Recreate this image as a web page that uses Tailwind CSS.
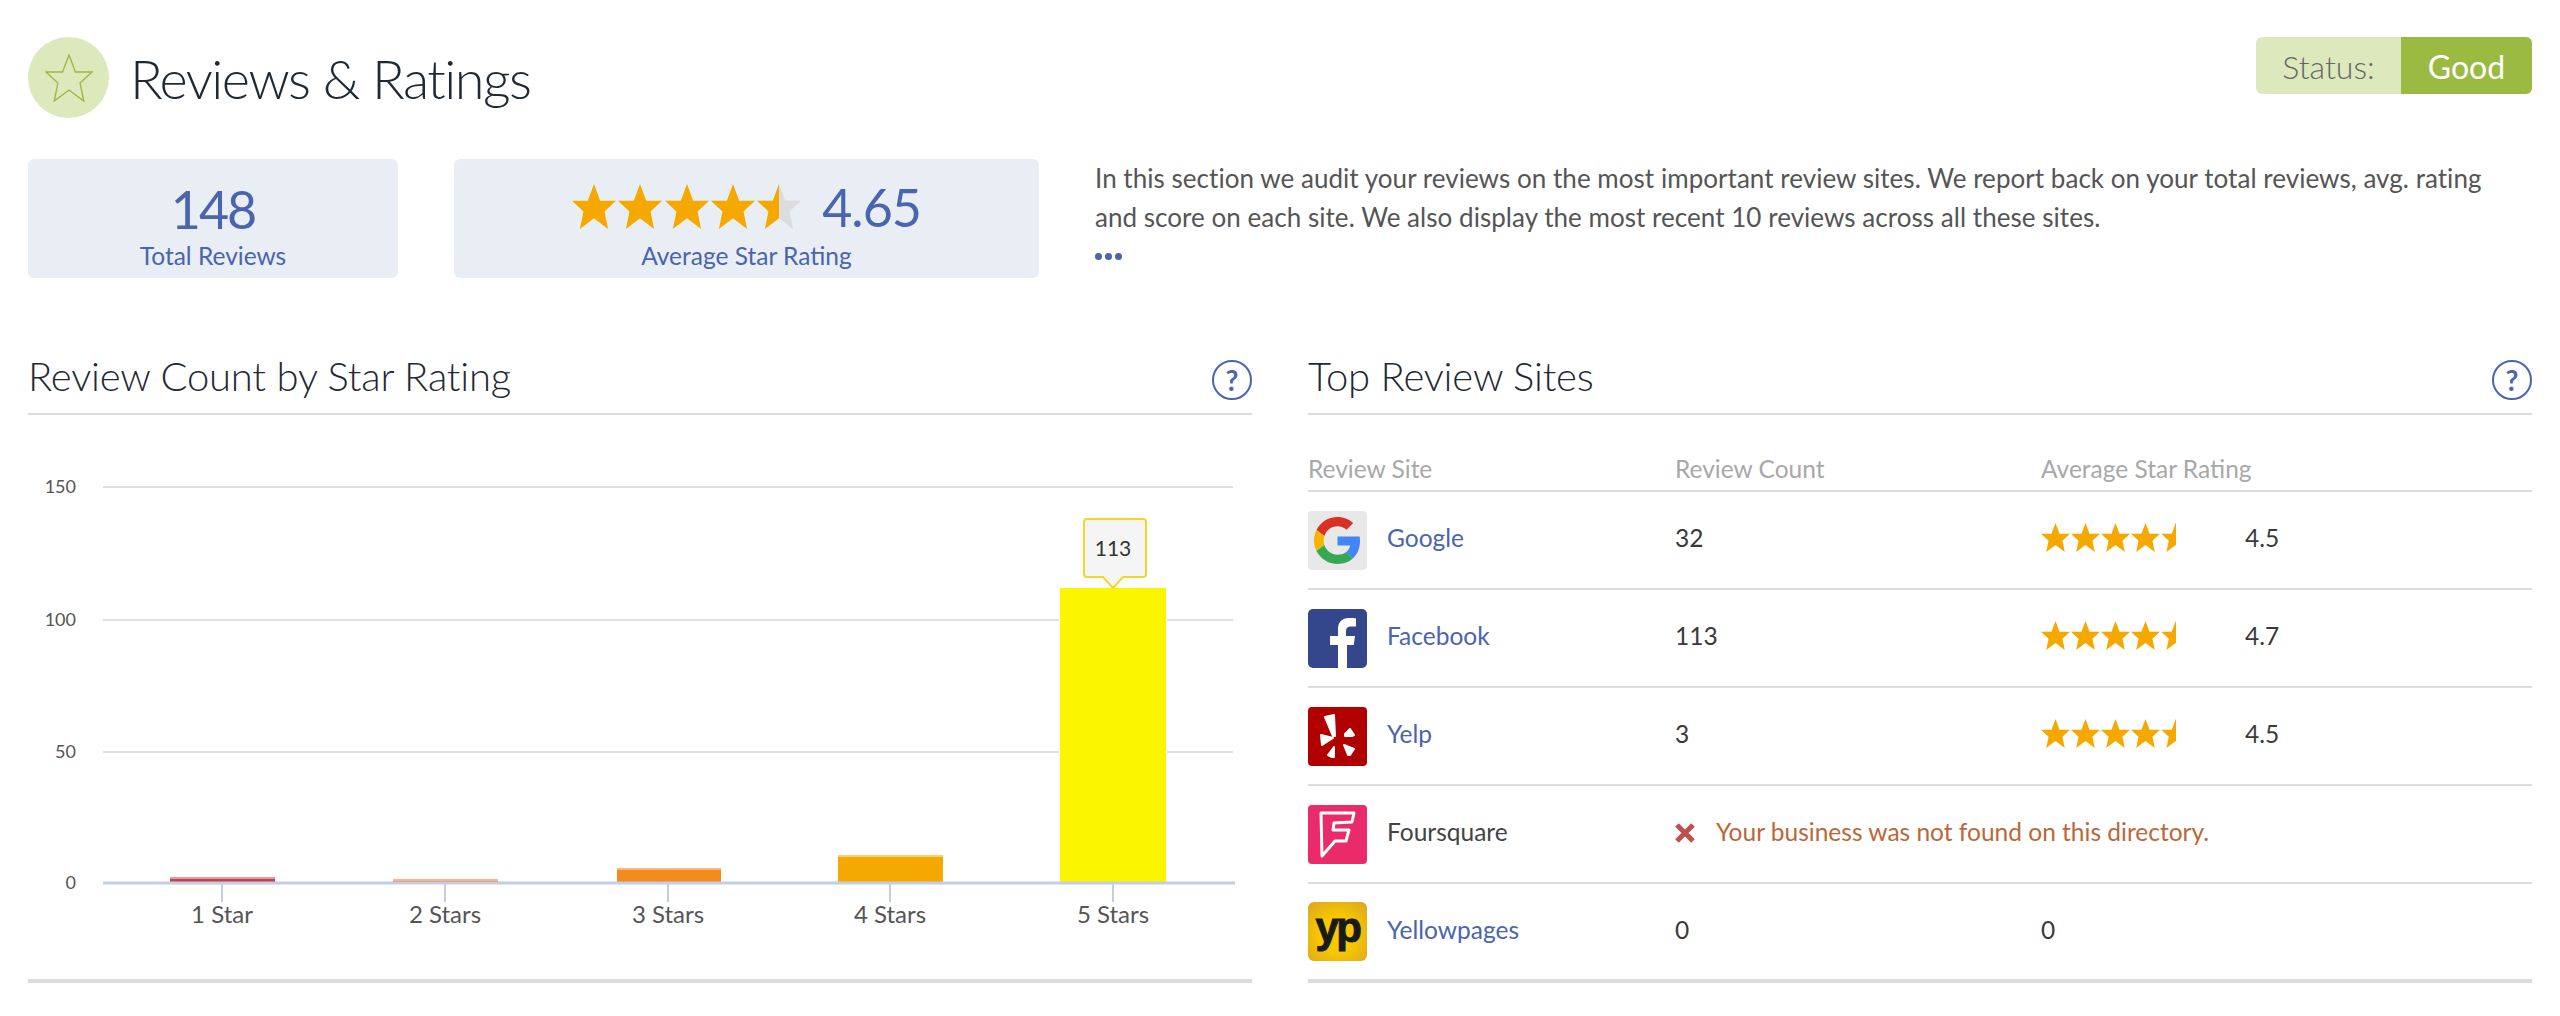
<!DOCTYPE html>
<html lang="en">
  <head>
    <meta charset="UTF-8" />
    <title>Reviews &amp; Ratings</title>
    <script src="https://cdn.jsdelivr.net/npm/@tailwindcss/browser@4"></script>
  </head>
  <body class="bg-white font-['Lato',sans-serif] text-[#3a3a3a] overflow-hidden">
    <svg class="hidden">
      <defs>
        <polygon id="star" points="50,0 64,37 100,37 74,61 82,100 50,76 18,100 26,61 0,37 36,37" />
      </defs>
    </svg>

    <div class="w-[2560px] h-[1016px] px-[28px] pt-[37px]">
      <!-- Header -->
      <header class="flex justify-between items-start h-[81px]">
        <div class="flex items-center gap-[21px]">
          <div class="w-[81px] h-[81px] rounded-full bg-[#dce9bc] flex items-center justify-center">
            <svg class="w-[48px] h-[48px]" viewBox="-2 -2 104 104" fill="none" stroke="#9aba42" stroke-width="3"><use href="#star" /></svg>
          </div>
          <h1 class="text-[54px] tracking-[-1.5px] font-light text-[#1f2933] leading-none pt-[3px]">Reviews &amp; Ratings</h1>
        </div>
        <div class="flex h-[57px] w-[276px] rounded-[6px] overflow-hidden text-[32px] leading-none">
          <div class="w-[145px] bg-[#dce9bc] text-[#666] font-light flex items-center justify-center pt-[2px]">Status:</div>
          <div class="flex-1 bg-[#9aba42] text-white flex items-center justify-center pt-[2px]">Good</div>
        </div>
      </header>

      <!-- Summary row -->
      <section class="flex mt-[41px] h-[119px]">
        <div class="w-[370px] bg-[#e9eef5] rounded-[6px] flex flex-col items-center pt-[24px] text-[#4a64ae]">
          <div class="text-[52px] tracking-[-2px] leading-[52px]">148</div>
          <div class="text-[24.5px] leading-[30px] mt-[6px]">Total Reviews</div>
        </div>
        <div class="w-[585px] ml-[56px] bg-[#e9eef5] rounded-[6px] flex flex-col items-center pt-[19px] text-[#4a64ae]">
          <div class="flex items-center h-[57px] gap-[21px]">
            <div class="flex gap-[2.3px]">
              <svg class="w-[44px] h-[45px]" viewBox="0 0 100 100" preserveAspectRatio="none" fill="#f5a900"><use href="#star" /></svg>
              <svg class="w-[44px] h-[45px]" viewBox="0 0 100 100" preserveAspectRatio="none" fill="#f5a900"><use href="#star" /></svg>
              <svg class="w-[44px] h-[45px]" viewBox="0 0 100 100" preserveAspectRatio="none" fill="#f5a900"><use href="#star" /></svg>
              <svg class="w-[44px] h-[45px]" viewBox="0 0 100 100" preserveAspectRatio="none" fill="#f5a900"><use href="#star" /></svg>
              <svg class="w-[44px] h-[45px]" viewBox="0 0 100 100" preserveAspectRatio="none">
                <defs><clipPath id="half"><rect width="50" height="100" /></clipPath></defs>
                <use href="#star" fill="#dcdcdc" />
                <use href="#star" fill="#f5a900" clip-path="url(#half)" />
              </svg>
            </div>
            <div class="text-[52px] tracking-[-1px] leading-[52px]">4.65</div>
          </div>
          <div class="text-[24.5px] leading-[30px] mt-[6px]">Average Star Rating</div>
        </div>
        <div class="ml-[56px] flex-1 text-[26px] tracking-[0.04px] leading-[39px] text-[#555]">
          <p>In this section we audit your reviews on the most important review sites. We report back on your total reviews, avg. rating<br />and score on each site. We also display the most recent 10 reviews across all these sites.</p>
          <div class="flex gap-[3px] mt-[16px]">
            <span class="w-[7px] h-[7px] rounded-full bg-[#4a64ae]"></span>
            <span class="w-[7px] h-[7px] rounded-full bg-[#4a64ae]"></span>
            <span class="w-[7px] h-[7px] rounded-full bg-[#4a64ae]"></span>
          </div>
        </div>
      </section>

      <div class="flex gap-[56px] mt-[72px]">
        <!-- Chart -->
        <section class="w-[1224px]">
          <div class="flex justify-between items-center h-[65px] border-b-2 border-[#dcdcdc] pb-[9px]">
            <h2 class="text-[40px] tracking-[-0.2px] font-light text-[#1f2933] leading-none mb-[3px]">Review Count by Star Rating</h2>
            <div class="w-[40px] h-[40px] mt-[6px] rounded-full border-2 border-[#4a64ae] text-[#4a64ae] flex items-center justify-center text-[28px] font-bold leading-none">?</div>
          </div>
          <svg class="block w-[1224px] h-[568px] border-b-4 border-[#dcdcdc]" viewBox="28 415 1224 564">
            <g stroke="#e0e0e0" stroke-width="2">
              <line x1="103" x2="1233" y1="487" y2="487" />
              <line x1="103" x2="1233" y1="620" y2="620" />
              <line x1="103" x2="1233" y1="752" y2="752" />
            </g>
            <g font-size="18" fill="#555" text-anchor="end">
              <text x="76" y="493">150</text>
              <text x="76" y="626">100</text>
              <text x="76" y="758">50</text>
              <text x="76" y="889">0</text>
            </g>
            <rect x="170" y="878" width="105" height="5" fill="#c0444c" />
            <rect x="170" y="877" width="105" height="2" fill="#e39aa0" />
            <rect x="393" y="880" width="105" height="3" fill="#f47d3f" />
            <rect x="393" y="879" width="105" height="2" fill="#f9b393" />
            <rect x="617" y="869" width="104" height="14" fill="#f38b1f" />
            <rect x="617" y="868" width="104" height="2" fill="#f8b878" />
            <rect x="838" y="856" width="105" height="27" fill="#f5a900" />
            <rect x="838" y="855" width="105" height="2" fill="#f9cf72" />
            <rect x="1060" y="588" width="106" height="295" fill="#fbf500" stroke="#fff" stroke-width="2" paint-order="stroke" />
            <line x1="103" x2="1235" y1="883" y2="883" stroke="#c3cde6" stroke-width="3" />
            <g stroke="#c3cde6" stroke-width="2">
              <line x1="222" x2="222" y1="884" y2="902" />
              <line x1="445" x2="445" y1="884" y2="902" />
              <line x1="668" x2="668" y1="884" y2="902" />
              <line x1="890" x2="890" y1="884" y2="902" />
              <line x1="1113" x2="1113" y1="884" y2="902" />
            </g>
            <g font-size="24" fill="#555" text-anchor="middle">
              <text x="222" y="923">1 Star</text>
              <text x="445" y="923">2 Stars</text>
              <text x="668" y="923">3 Stars</text>
              <text x="890" y="923">4 Stars</text>
              <text x="1113" y="923">5 Stars</text>
            </g>
            <path d="M1087 519h56a3 3 0 0 1 3 3v52a3 3 0 0 1-3 3h-20l-10 11-10-11h-16a3 3 0 0 1-3-3v-52a3 3 0 0 1 3-3z" fill="#f5f5f5" stroke="#f9d52a" stroke-width="2" />
            <text x="1113" y="556" font-size="21" fill="#333" text-anchor="middle">113</text>
          </svg>
        </section>

        <!-- Top review sites -->
        <section class="w-[1224px]">
          <div class="flex justify-between items-center h-[65px] border-b-2 border-[#dcdcdc] pb-[9px]">
            <h2 class="text-[40px] tracking-[-0.2px] font-light text-[#1f2933] leading-none mb-[3px]">Top Review Sites</h2>
            <div class="w-[40px] h-[40px] mt-[6px] rounded-full border-2 border-[#4a64ae] text-[#4a64ae] flex items-center justify-center text-[28px] font-bold leading-none">?</div>
          </div>

          <div class="grid grid-cols-[367px_366px_1fr] h-[77px] items-end pb-[6px] border-b-2 border-[#dcdcdc] text-[24.5px] leading-[30px] text-[#a8a8a8]">
            <div>Review Site</div>
            <div>Review Count</div>
            <div>Average Star Rating</div>
          </div>

          <!-- Google -->
          <div class="grid grid-cols-[367px_366px_204px_1fr] h-[98px] items-center border-b-2 border-[#dcdcdc] text-[24.5px]">
            <div class="flex items-center gap-[20px]">
              <div class="w-[59px] h-[59px] rounded-[4px] bg-[#e8e8e8] flex items-center justify-center">
                <svg class="w-[47px] h-[47px]" viewBox="0 0 48 48">
                  <path fill="#d93025" d="M24 9.5c3.54 0 6.71 1.22 9.21 3.6l6.85-6.85C35.9 2.38 30.47 0 24 0 14.62 0 6.51 5.38 2.56 13.22l7.98 6.19C12.43 13.72 17.74 9.5 24 9.5z" />
                  <path fill="#4285f4" d="M46.98 24.55c0-1.57-.15-3.09-.38-4.55H24v9.02h12.94c-.58 2.96-2.26 5.48-4.78 7.18l7.73 6c4.51-4.18 7.09-10.36 7.09-17.65z" />
                  <path fill="#f4b400" d="M10.53 28.59c-.48-1.45-.76-2.99-.76-4.59s.27-3.14.76-4.59l-7.98-6.19C.92 16.46 0 20.12 0 24c0 3.88.92 7.54 2.56 10.78l7.97-6.19z" />
                  <path fill="#34a853" d="M24 48c6.48 0 11.93-2.13 15.89-5.81l-7.73-6c-2.15 1.45-4.92 2.3-8.16 2.3-6.26 0-11.57-4.22-13.47-9.91l-7.98 6.19C6.51 42.62 14.62 48 24 48z" />
                </svg>
              </div>
              <span class="text-[#4a64ae] pb-[3px]">Google</span>
            </div>
            <div class="pb-[3px]">32</div>
            <div class="flex gap-[1px] pb-[5px]">
              <svg class="w-[29px] h-[29px]" viewBox="0 0 100 100" fill="#f5a900"><use href="#star" /></svg>
              <svg class="w-[29px] h-[29px]" viewBox="0 0 100 100" fill="#f5a900"><use href="#star" /></svg>
              <svg class="w-[29px] h-[29px]" viewBox="0 0 100 100" fill="#f5a900"><use href="#star" /></svg>
              <svg class="w-[29px] h-[29px]" viewBox="0 0 100 100" fill="#f5a900"><use href="#star" /></svg>
              <svg class="w-[15px] h-[29px]" viewBox="0 0 50 100" fill="#f5a900"><use href="#star" /></svg>
            </div>
            <div class="pb-[3px]">4.5</div>
          </div>

          <!-- Facebook -->
          <div class="grid grid-cols-[367px_366px_204px_1fr] h-[98px] items-center border-b-2 border-[#dcdcdc] text-[24.5px]">
            <div class="flex items-center gap-[20px]">
              <div class="w-[59px] h-[59px] rounded-[5px] bg-[#35478c]">
                <svg class="w-[59px] h-[59px]" viewBox="0 0 59 59"><path fill="#fff" d="M30 59V36h-8v-9h8v-7c0-7 4-11 11-11 3 0 6 .2 7 .4v8h-5c-3.5 0-5 1.5-5 4.6v5h9l-1.2 9H39v23z" /></svg>
              </div>
              <span class="text-[#4a64ae] pb-[3px]">Facebook</span>
            </div>
            <div class="pb-[3px]">113</div>
            <div class="flex gap-[1px] pb-[5px]">
              <svg class="w-[29px] h-[29px]" viewBox="0 0 100 100" fill="#f5a900"><use href="#star" /></svg>
              <svg class="w-[29px] h-[29px]" viewBox="0 0 100 100" fill="#f5a900"><use href="#star" /></svg>
              <svg class="w-[29px] h-[29px]" viewBox="0 0 100 100" fill="#f5a900"><use href="#star" /></svg>
              <svg class="w-[29px] h-[29px]" viewBox="0 0 100 100" fill="#f5a900"><use href="#star" /></svg>
              <svg class="w-[15px] h-[29px]" viewBox="0 0 50 100" fill="#f5a900"><use href="#star" /></svg>
            </div>
            <div class="pb-[3px]">4.7</div>
          </div>

          <!-- Yelp -->
          <div class="grid grid-cols-[367px_366px_204px_1fr] h-[98px] items-center border-b-2 border-[#dcdcdc] text-[24.5px]">
            <div class="flex items-center gap-[20px]">
              <div class="w-[59px] h-[59px] rounded-[4px] bg-[#b00000]">
                <svg class="w-[59px] h-[59px]" viewBox="0 0 59 59" fill="#fff" stroke="#fff" stroke-width="2" stroke-linejoin="round">
                  <polygon points="17,10 26,8 27,29 25,29" />
                  <polygon points="37,27 42,22 46,28 44,29 37,29" />
                  <polygon points="13,28 25,31 14,38" />
                  <polygon points="26,40 26,50 24,50 20,48" />
                  <polygon points="36,38 46,42 42,48 40,48" />
                </svg>
              </div>
              <span class="text-[#4a64ae] pb-[3px]">Yelp</span>
            </div>
            <div class="pb-[3px]">3</div>
            <div class="flex gap-[1px] pb-[5px]">
              <svg class="w-[29px] h-[29px]" viewBox="0 0 100 100" fill="#f5a900"><use href="#star" /></svg>
              <svg class="w-[29px] h-[29px]" viewBox="0 0 100 100" fill="#f5a900"><use href="#star" /></svg>
              <svg class="w-[29px] h-[29px]" viewBox="0 0 100 100" fill="#f5a900"><use href="#star" /></svg>
              <svg class="w-[29px] h-[29px]" viewBox="0 0 100 100" fill="#f5a900"><use href="#star" /></svg>
              <svg class="w-[15px] h-[29px]" viewBox="0 0 50 100" fill="#f5a900"><use href="#star" /></svg>
            </div>
            <div class="pb-[3px]">4.5</div>
          </div>

          <!-- Foursquare -->
          <div class="grid grid-cols-[367px_1fr] h-[98px] items-center border-b-2 border-[#dcdcdc] text-[24.5px]">
            <div class="flex items-center gap-[20px]">
              <div class="w-[59px] h-[59px] rounded-[4px] bg-[#ea2b69]">
                <svg class="w-[59px] h-[59px]" viewBox="0 0 59 59">
                  <path fill="none" stroke="#fff" stroke-width="3" stroke-linejoin="round" d="M13 8H46L44 17 26 18 25 25H41L38 36H27L14 51Z" />
                </svg>
              </div>
              <span class="text-[#444] pb-[3px]">Foursquare</span>
            </div>
            <div class="flex items-center gap-[21px] text-[#b9683a] pb-[3px]">
              <svg class="w-[20px] h-[20px]" viewBox="0 0 20 20" stroke="#c0504d" stroke-width="5"><path d="M2 2l16 16M18 2L2 18" /></svg>
              <span>Your business was not found on this directory.</span>
            </div>
          </div>

          <!-- Yellowpages -->
          <div class="grid grid-cols-[367px_366px_1fr] h-[99px] items-center border-b-4 border-[#dcdcdc] text-[24.5px]">
            <div class="flex items-center gap-[20px]">
              <div class="w-[59px] h-[59px] rounded-[6px] bg-[radial-gradient(circle_at_50%_55%,#f8c800_40%,#d9a520_100%)] flex items-center justify-center">
                <span class="font-['Liberation_Sans',sans-serif] font-bold text-[42px] leading-none tracking-[-2.5px] text-[#1a1a1a] [-webkit-text-stroke:1px_#1a1a1a] pb-[8px]">yp</span>
              </div>
              <span class="text-[#4a64ae] pb-[3px]">Yellowpages</span>
            </div>
            <div class="pb-[3px]">0</div>
            <div class="pb-[3px]">0</div>
          </div>
        </section>
      </div>
    </div>
  </body>
</html>
